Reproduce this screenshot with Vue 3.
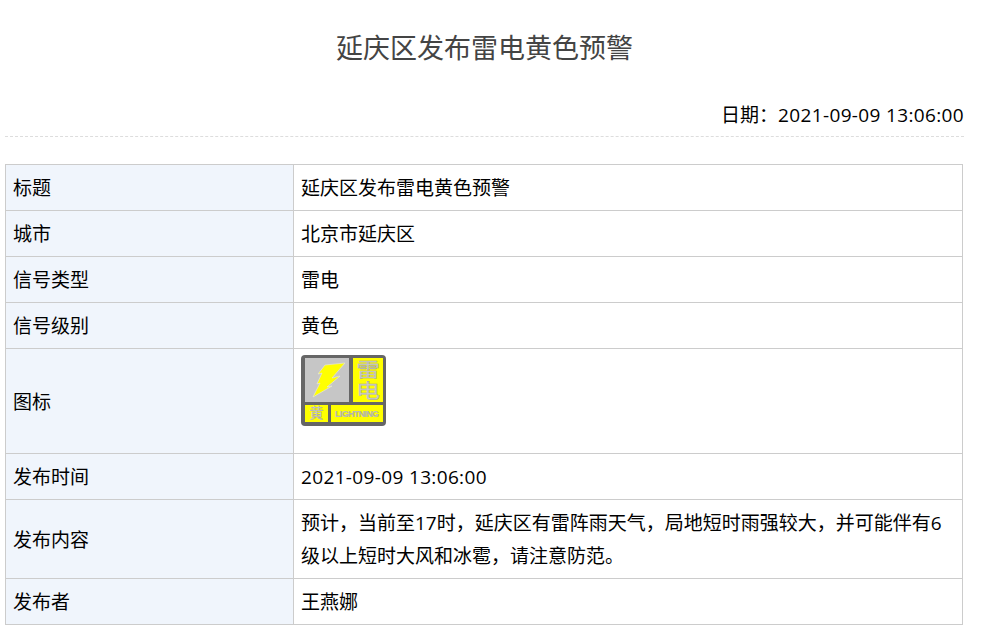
<script setup>
const rows = [
  { label: '标题', value: '延庆区发布雷电黄色预警' },
  { label: '城市', value: '北京市延庆区' },
  { label: '信号类型', value: '雷电' },
  { label: '信号级别', value: '黄色' },
  { label: '图标', icon: true },
  { label: '发布时间', value: '2021-09-09 13:06:00', stamp: true },
  { label: '发布内容', value: '预计，当前至17时，延庆区有雷阵雨天气，局地短时雨强较大，并可能伴有6级以上短时大风和冰雹，请注意防范。' },
  { label: '发布者', value: '王燕娜' },
]
</script>

<template>
  <div class="page">
    <h1 class="title">延庆区发布雷电黄色预警</h1>
    <div class="date">日期：<span class="stamp">2021-09-09 13:06:00</span></div>
    <table class="info">
      <colgroup>
        <col class="label-col" />
        <col />
      </colgroup>
      <tbody>
        <tr v-for="row in rows" :key="row.label">
          <td class="label">{{ row.label }}</td>
          <td v-if="row.icon" class="icon-cell">
            <svg class="signal" width="86" height="92" viewBox="0 0 86 92">
              <rect x="0" y="0" width="85" height="71" rx="4" fill="#666" />
              <rect x="4" y="3" width="44" height="44" fill="#c6c6c6" />
              <path d="M24 10 L44 8 L31 23 L39 21 L26 32 L31 31 L12 42 L19 28 L16 29 L21 18 L17 19 Z" fill="#ffff00" stroke="#e8e8e8" stroke-width="0.6" />
              <rect x="52" y="3" width="30" height="44" fill="#ffff00" />
              <text x="0" y="0" class="big" transform="translate(67 22) scale(1.25 1)">雷</text>
              <text x="0" y="0" class="big" transform="translate(67 43) scale(1.25 1)">电</text>
              <rect x="4" y="50" width="23" height="17" fill="#ffff00" />
              <text x="15.5" y="63" class="small">黄</text>
              <rect x="30" y="50" width="52" height="17" fill="#ffff00" />
              <text x="34" y="62" class="tiny" textLength="44" lengthAdjust="spacing">LIGHTNING</text>
            </svg>
          </td>
          <td v-else :class="{ stamp: row.stamp }">{{ row.value }}</td>
        </tr>
      </tbody>
    </table>
  </div>
</template>

<style>
body {
  margin: 0;
  background: #fff;
}
</style>

<style scoped>
.page {
  width: 959px;
  margin-left: 5px;
  font-family: "Open Sans", "Noto Sans CJK SC", sans-serif;
  color: #000;
}
.title {
  margin: 0;
  padding-top: 27px;
  height: 50px;
  line-height: 42px;
  font-size: 27px;
  font-weight: 400;
  color: #444;
  text-align: center;
}
.date {
  margin-top: 22px;
  height: 37px;
  line-height: 32px;
  font-size: 19px;
  text-align: right;
  border-bottom: 1px dashed #ddd;
}
.stamp {
  letter-spacing: 0.35px;
}
.info {
  margin-top: 27px;
  width: 958px;
  table-layout: fixed;
  border-collapse: collapse;
  font-size: 19px;
  line-height: 33px;
}
.label-col {
  width: 288px;
}
.info td {
  border: 1px solid #ccc;
  padding: 7px 7px 5px;
}
.info .icon-cell {
  padding: 6px 7px;
}
.info .label {
  background: #f0f5fc;
}
.signal {
  display: block;
}
.big {
  font-size: 19px;
  fill: #cfcfcf;
  stroke: #a0a0a0;
  stroke-width: 0.4px;
  text-anchor: middle;
}
.small {
  font-size: 14px;
  fill: #d8d8d8;
  stroke: #a0a0a0;
  stroke-width: 0.3px;
  text-anchor: middle;
}
.tiny {
  font-size: 9px;
  font-weight: 700;
  fill: #bbb;
  stroke: #999;
  stroke-width: 0.2px;
  font-family: "Liberation Sans", sans-serif;
}
</style>
